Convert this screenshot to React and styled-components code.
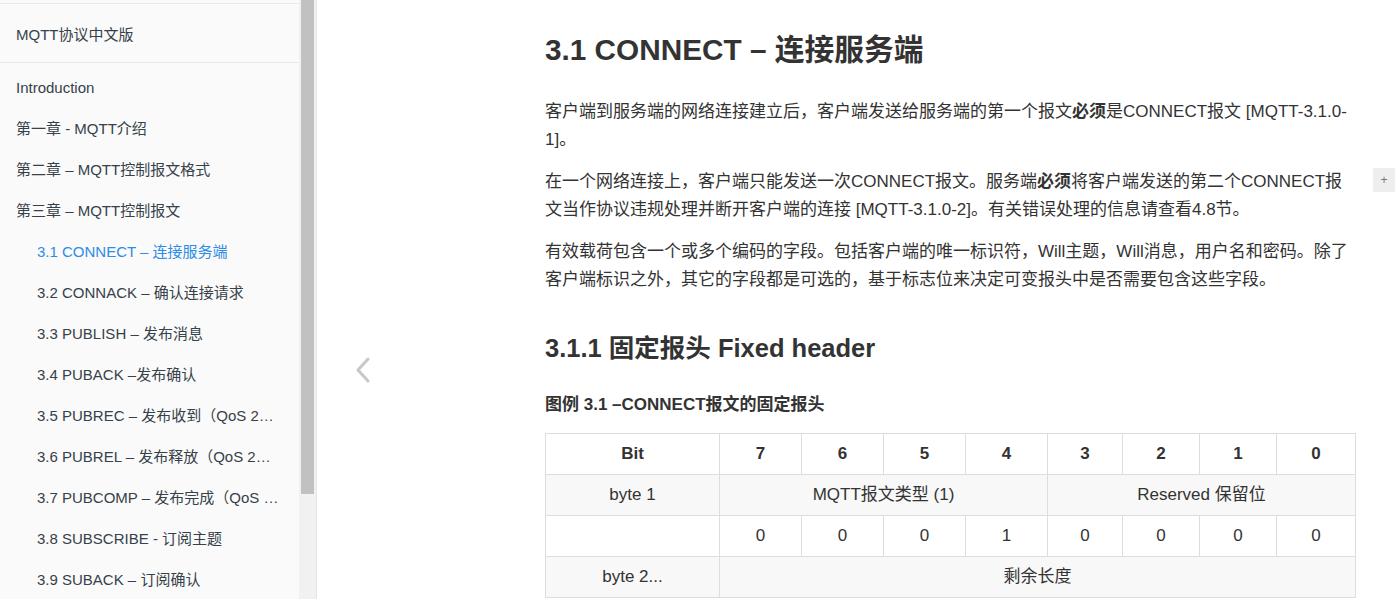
import React from 'react';
import styled, { createGlobalStyle } from 'styled-components';

const GlobalStyle = createGlobalStyle`
    html, body {
        margin: 0;
        padding: 0;
        background: #fff;
        font-family: "Liberation Sans", "Noto Sans CJK SC", sans-serif;
        color: #333;
    }
    * { box-sizing: border-box; }
`

const Book = styled.div`
    position: relative;
    display: flex;
    height: 599px;
    overflow: hidden;
`
const Summary = styled.div`
    display: flex;
    flex: 0 0 317px;
    height: 100%;
    border-right: 1px solid #e6e6e6;
`
const SummaryList = styled.ul`
    width: 299px;
    margin: 0;
    padding: 3px 0 0;
    list-style: none;
    background: #fafafa;
    font-size: 15px;
`
const Divider = styled.li`
    height: 1px;
    margin-top: ${p => p.$top || 0}px;
    background: rgba(0, 0, 0, 0.07);
`
const Chapter = styled.li`
    margin-top: ${p => p.$top || 0}px;
`
const ChapterLink = styled.a`
    display: block;
    padding: 10px 15px 10px ${p => (p.$nested ? 37 : 16)}px;
    line-height: 21px;
    color: ${p => (p.$active ? '#2b8de6' : '#364149')};
    text-decoration: none;
    white-space: nowrap;
    overflow: hidden;
    text-overflow: ellipsis;
`
const ScrollTrack = styled.div`
    flex: 0 0 17px;
    padding: 0 2px 0 2px;
    background: #f1f1f1;
`
const ScrollThumb = styled.div`
    width: 13px;
    height: 494px;
    background: #c1c1c1;
`
const BookBody = styled.div`
    position: relative;
    flex: 1;
    height: 100%;
`
const PageInner = styled.section`
    width: 810px;
    margin-left: 228px;
    padding-top: 32px;
    font-size: 17px;
`
const H1 = styled.h1`
    margin: 0;
    font-size: 29.75px;
    line-height: 36px;
    font-weight: bold;
    color: #333;
`
const Para = styled.p`
    margin: ${p => (p.$first ? 30 : 14)}px 0 14px;
    line-height: 28px;
    color: #333;
    white-space: nowrap;
`
const H2 = styled.h2`
    margin: 39px 0 0;
    font-size: 25.5px;
    line-height: 30px;
    font-weight: bold;
    color: #333;
`
const Caption = styled.h4`
    margin: 30px 0 16px;
    font-size: 17px;
    line-height: 24px;
    font-weight: bold;
    color: #333;
`
const Table = styled.table`
    width: 810px;
    table-layout: fixed;
    border-collapse: collapse;
    border-spacing: 0;
`
const Row = styled.tr`
    background: ${p => (p.$striped ? '#f8f8f8' : '#fff')};
`
const Cell = styled.td`
    padding: 6px 13px;
    line-height: 28px;
    border: 1px solid #ddd;
    text-align: center;
    font-weight: ${p => (p.$head ? 'bold' : 'normal')};
    white-space: nowrap;
`
const PrevLink = styled.a`
    position: absolute;
    left: 38px;
    top: 357px;
    display: block;
    width: 16px;
    height: 26px;
`
const FloatButton = styled.div`
    position: absolute;
    right: 0;
    top: 168px;
    width: 22px;
    height: 24px;
    background: #eee;
    color: #777;
    font-size: 12px;
    line-height: 24px;
    text-align: center;
`

const chapters = [
    { title: 'Introduction' },
    { title: '第一章 - MQTT介绍' },
    { title: '第二章 – MQTT控制报文格式' },
    { title: '第三章 – MQTT控制报文' },
    { title: '3.1 CONNECT – 连接服务端', nested: true, active: true },
    { title: '3.2 CONNACK – 确认连接请求', nested: true },
    { title: '3.3 PUBLISH – 发布消息', nested: true },
    { title: '3.4 PUBACK –发布确认', nested: true },
    { title: '3.5 PUBREC – 发布收到（QoS 2，第一步）', nested: true },
    { title: '3.6 PUBREL – 发布释放（QoS 2，第二步）', nested: true },
    { title: '3.7 PUBCOMP – 发布完成（QoS 2，第三步）', nested: true },
    { title: '3.8 SUBSCRIBE - 订阅主题', nested: true },
    { title: '3.9 SUBACK – 订阅确认', nested: true },
]

const App = () => {
    return (
        <Book>
            <GlobalStyle />
            <Summary>
                <SummaryList>
                    <Divider />
                    <Chapter $top={10}>
                        <ChapterLink>MQTT协议中文版</ChapterLink>
                    </Chapter>
                    <Divider $top={7} />
                    <Chapter $top={4}>
                        {chapters.map(c => (
                            <ChapterLink key={c.title} $nested={c.nested} $active={c.active}>
                                {c.title}
                            </ChapterLink>
                        ))}
                    </Chapter>
                </SummaryList>
                <ScrollTrack>
                    <ScrollThumb />
                </ScrollTrack>
            </Summary>

            <BookBody>
                <PrevLink>
                    <svg width="16" height="26" viewBox="0 0 16 26">
                        <polyline points="13,2 3,13 13,24" fill="none" stroke="#c8c8c8" strokeWidth="3" strokeLinecap="round" strokeLinejoin="round" />
                    </svg>
                </PrevLink>
                <PageInner>
                    <H1>3.1 CONNECT – 连接服务端</H1>
                    <Para $first>
                        客户端到服务端的网络连接建立后，客户端发送给服务端的第一个报文<b>必须</b>是CONNECT报文 [MQTT-3.1.0-<br />1]。
                    </Para>
                    <Para>
                        在一个网络连接上，客户端只能发送一次CONNECT报文。服务端<b>必须</b>将客户端发送的第二个CONNECT报<br />文当作协议违规处理并断开客户端的连接 [MQTT-3.1.0-2]。有关错误处理的信息请查看4.8节。
                    </Para>
                    <Para>
                        有效载荷包含一个或多个编码的字段。包括客户端的唯一标识符，Will主题，Will消息，用户名和密码。除了<br />客户端标识之外，其它的字段都是可选的，基于标志位来决定可变报头中是否需要包含这些字段。
                    </Para>
                    <H2>3.1.1 固定报头 Fixed header</H2>
                    <Caption>图例 3.1 –CONNECT报文的固定报头</Caption>
                    <Table>
                        <colgroup>
                            <col style={{ width: 174 }} />
                            <col style={{ width: 82 }} />
                            <col style={{ width: 82 }} />
                            <col style={{ width: 82 }} />
                            <col style={{ width: 82 }} />
                            <col style={{ width: 75 }} />
                            <col style={{ width: 77 }} />
                            <col style={{ width: 77 }} />
                            <col style={{ width: 79 }} />
                        </colgroup>
                        <tbody>
                            <Row>
                                {['Bit', '7', '6', '5', '4', '3', '2', '1', '0'].map(h => (
                                    <Cell key={h} $head>{h}</Cell>
                                ))}
                            </Row>
                            <Row $striped>
                                <Cell>byte 1</Cell>
                                <Cell colSpan={4}>MQTT报文类型 (1)</Cell>
                                <Cell colSpan={4}>Reserved 保留位</Cell>
                            </Row>
                            <Row>
                                <Cell></Cell>
                                {['0', '0', '0', '1', '0', '0', '0', '0'].map((v, i) => (
                                    <Cell key={i}>{v}</Cell>
                                ))}
                            </Row>
                            <Row $striped>
                                <Cell>byte 2...</Cell>
                                <Cell colSpan={8}>剩余长度</Cell>
                            </Row>
                        </tbody>
                    </Table>
                </PageInner>
            </BookBody>
            <FloatButton>+</FloatButton>
        </Book>
    );
}

export default App;
